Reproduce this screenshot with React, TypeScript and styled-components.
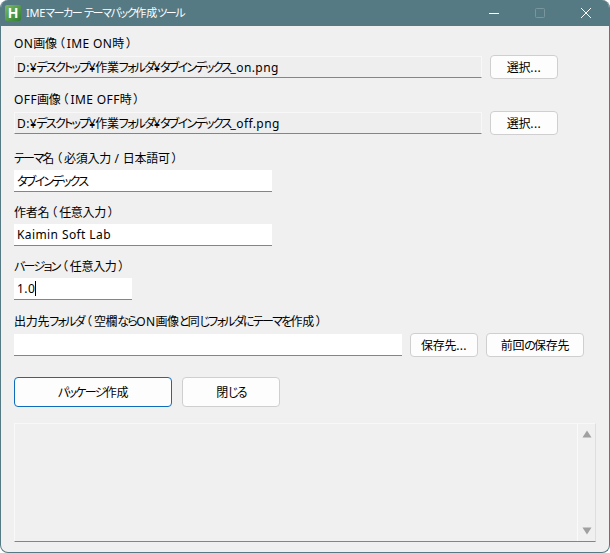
import { createGlobalStyle } from 'styled-components'
import styled from 'styled-components'

const FONT = `"Noto Sans", "Noto Sans CJK JP", sans-serif`

// the original UI font has much narrower kana than Noto, so runs get tightened one by one
function Txt({ children }: { children: string }) {
  const runs = children.match(/[\u3040-\u30ff]+|[（）]|[A-Za-z0-9._ :/]+|[^\u3040-\u30ff（）A-Za-z0-9._ :/]+/g) || []
  return (
    <>
      {runs.map((run, i) => {
        if (/^[\u3040-\u30ff]/.test(run)) return <Kana key={i}>{run}</Kana>
        if (/^[（）]/.test(run)) return <Paren key={i}>{run}</Paren>
        if (/^[A-Za-z0-9._ :/]/.test(run)) return <Latin key={i}>{run}</Latin>
        return <Kanji key={i}>{run}</Kanji>
      })}
    </>
  )
}

export default function App() {
  return (
    <>
      <GlobalStyle />
      <Window>
        <TitleBar>
          <AppIcon>H</AppIcon>
          <Title><Txt>IMEマーカー テーマパック作成ツール</Txt></Title>
          <WindowControls>
            <ControlSlot>
              <svg width="12" height="12" viewBox="0 0 12 12">
                <path d="M1 6.5h10" stroke="#fff" strokeWidth="1" />
              </svg>
            </ControlSlot>
            <ControlSlot>
              <svg width="12" height="12" viewBox="0 0 12 12">
                <rect x="1.5" y="1.5" width="9" height="9" rx="1" fill="none" stroke="#7a969d" />
              </svg>
            </ControlSlot>
            <ControlSlot>
              <svg width="12" height="12" viewBox="0 0 12 12">
                <path d="M1 1l10 10M11 1L1 11" stroke="#fff" strokeWidth="1" />
              </svg>
            </ControlSlot>
          </WindowControls>
        </TitleBar>
        <Body>
          <Label><Txt>ON画像（IME ON時）</Txt></Label>
          <Row>
            <PathField><Txt>D:¥デスクトップ¥作業フォルダ¥タブインデックス_on.png</Txt></PathField>
            <Button $width={68}><Txt>選択...</Txt></Button>
          </Row>
          <Label $top={13}><Txt>OFF画像（IME OFF時）</Txt></Label>
          <Row>
            <PathField><Txt>D:¥デスクトップ¥作業フォルダ¥タブインデックス_off.png</Txt></PathField>
            <Button $width={68}><Txt>選択...</Txt></Button>
          </Row>
          <Label $top={16}><Txt>テーマ名（必須入力 / 日本語可）</Txt></Label>
          <TextField $width={258}><Txt>タブインデックス</Txt></TextField>
          <Label $top={13}><Txt>作者名（任意入力）</Txt></Label>
          <TextField $width={258}><Txt>Kaimin Soft Lab</Txt></TextField>
          <Label $top={13}><Txt>バージョン（任意入力）</Txt></Label>
          <TextField $width={118}>
            <Txt>1.0</Txt>
            <Caret />
          </TextField>
          <Label $top={14}><Txt>出力先フォルダ（空欄ならON画像と同じフォルダにテーマを作成）</Txt></Label>
          <Row>
            <TextField $width={388} />
            <Button $width={68}><Txt>保存先...</Txt></Button>
            <Button $width={98}><Txt>前回の保存先</Txt></Button>
          </Row>
          <Actions>
            <ActionButton $primary><Txt>パッケージ作成</Txt></ActionButton>
            <ActionButton $small><Txt>閉じる</Txt></ActionButton>
          </Actions>
          <LogBox>
            <LogText />
            <ScrollTrack>
              <svg width="10" height="8" viewBox="0 0 10 8">
                <path d="M5 0.5L9.5 7.5H0.5z" fill="#a0a0a0" />
              </svg>
              <svg width="10" height="8" viewBox="0 0 10 8">
                <path d="M0.5 0.5H9.5L5 7.5z" fill="#a0a0a0" />
              </svg>
            </ScrollTrack>
          </LogBox>
        </Body>
      </Window>
    </>
  )
}

const GlobalStyle = createGlobalStyle`
  html, body {
    margin: 0;
    background: #ffffff;
  }
  body {
    font-family: ${FONT};
    font-size: 12px;
    color: #000000;
  }
`

const Kana = styled.span`
  font-feature-settings: "palt";
  letter-spacing: -1.7px;
`

const Kanji = styled.span`
  letter-spacing: -0.3px;
`

const Paren = styled.span`
  font-feature-settings: "palt";
  padding: 0 2px;
`

const Latin = styled.span`
  letter-spacing: 0.4px;
  white-space: pre;
`

const Window = styled.div`
  width: 610px;
  height: 553px;
  box-sizing: border-box;
  display: flex;
  flex-flow: column;
  overflow: hidden;
  border: solid 1px #567a84;
  border-top: none;
  border-radius: 8px;
  background: #f0f0f0;
`

const TitleBar = styled.div`
  height: 26px;
  flex: none;
  display: flex;
  align-items: center;
  padding-left: 4px;
  background: #567a84;
  color: #ffffff;
`

const AppIcon = styled.div`
  width: 16px;
  height: 16px;
  display: flex;
  align-items: center;
  justify-content: center;
  border-radius: 2px;
  background: linear-gradient(135deg, #7dbb62, #2f7d33);
  color: #ffffff;
  font-size: 14px;
  font-weight: 700;
  font-family: "Liberation Sans", sans-serif;
`

const Title = styled.div`
  margin-left: 5px;
  font-size: 11px;
  line-height: 16px;
  ${Latin} {
    letter-spacing: -0.2px;
  }
  ${Kana} {
    letter-spacing: -1.4px;
  }
  ${Kanji} {
    letter-spacing: 0;
  }
`

const WindowControls = styled.div`
  margin-left: auto;
  display: flex;
`

const ControlSlot = styled.div`
  width: 46px;
  height: 26px;
  display: flex;
  align-items: center;
  justify-content: center;
`

const Body = styled.div`
  flex: 1;
  display: flex;
  flex-flow: column;
  padding: 10px 13px 0;
`

const Label = styled.div<{ $top?: number }>`
  height: 16px;
  line-height: 16px;
  margin-top: ${(p) => p.$top || 0}px;
  margin-bottom: 3px;
  white-space: nowrap;
`

const Row = styled.div`
  display: flex;
  align-items: center;
  gap: 8px;
  height: 24px;
`

const PathField = styled.div`
  width: 468px;
  height: 22px;
  box-sizing: border-box;
  display: flex;
  align-items: center;
  padding: 0 2px;
  border: solid 1px #f8f8f8;
  border-bottom: solid 1px #858585;
  background: #eeeeee;
  white-space: nowrap;
`

const TextField = styled.div<{ $width: number }>`
  width: ${(p) => p.$width}px;
  height: 22px;
  flex: none;
  box-sizing: border-box;
  display: flex;
  align-items: center;
  padding: 0 3px;
  border-bottom: solid 1px #858585;
  background: #ffffff;
  white-space: nowrap;
`

const Caret = styled.span`
  width: 1px;
  height: 15px;
  background: #000000;
`

const Button = styled.button<{ $width: number }>`
  width: ${(p) => p.$width}px;
  height: 24px;
  flex: none;
  box-sizing: border-box;
  padding: 0;
  border: solid 1px #cfcfcf;
  border-radius: 4px;
  background: #fdfdfd;
  color: #000000;
  font: 12px ${FONT};
`

const Actions = styled.div`
  display: flex;
  gap: 10px;
  margin-top: 20px;
`

const ActionButton = styled.button<{ $primary?: boolean; $small?: boolean }>`
  width: ${(p) => (p.$small ? 98 : 158)}px;
  height: 30px;
  box-sizing: border-box;
  padding: 0;
  border: solid 1px ${(p) => (p.$primary ? '#0f6cbd' : '#cfcfcf')};
  border-radius: 4px;
  background: #fdfdfd;
  color: #000000;
  font: 12px ${FONT};
`

const LogBox = styled.div`
  width: 582px;
  height: 119px;
  margin-top: 16px;
  box-sizing: border-box;
  display: flex;
  border: solid 1px #f8f8f8;
  border-right-color: #dedede;
  border-bottom: solid 1px #858585;
  background: #f0f0f0;
`

const LogText = styled.div`
  flex: 1;
`

const ScrollTrack = styled.div`
  width: 18px;
  box-sizing: border-box;
  display: flex;
  flex-flow: column;
  align-items: center;
  justify-content: space-between;
  padding: 6px 0;
  border-left: solid 1px #fafafa;
`
